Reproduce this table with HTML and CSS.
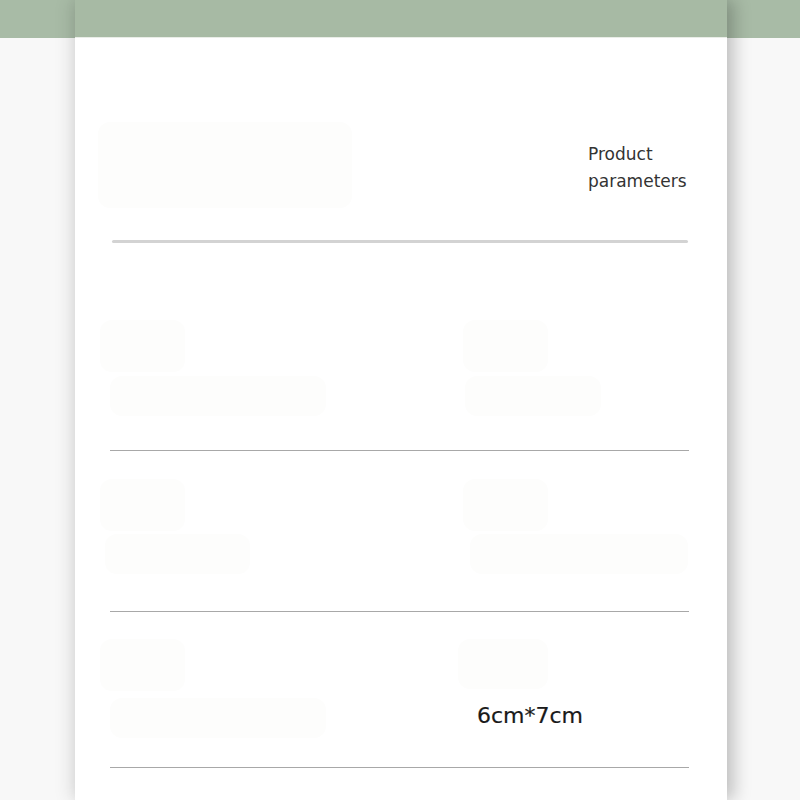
FILE: index.html
```html
<!DOCTYPE html>
<html lang="en">
<head>
    <meta charset="UTF-8">
    <meta name="viewport" content="width=device-width, initial-scale=1.0">
    <title>Product parameters</title>
    <link rel="stylesheet" href="styles.css">
</head>
<body>
    <div class="page">
        <div class="sheet">
            <div class="sheet-top"></div>

            <div class="sheet-body">
                <div class="head">
                    <div class="blob blob-title"></div>
                    <p class="head-text">Product<br>parameters</p>
                </div>
                <hr class="rule-thick">

                <div class="param-row row-one">
                    <div class="cell">
                        <div class="blob blob-label"></div>
                        <div class="blob blob-value wide-a"></div>
                    </div>
                    <div class="cell cell-right">
                        <div class="blob blob-label"></div>
                        <div class="blob blob-value wide-b"></div>
                    </div>
                </div>

                <div class="param-row row-two">
                    <div class="cell">
                        <div class="blob blob-label"></div>
                        <div class="blob blob-value wide-c"></div>
                    </div>
                    <div class="cell cell-right">
                        <div class="blob blob-label"></div>
                        <div class="blob blob-value wide-d"></div>
                    </div>
                </div>

                <div class="param-row row-three">
                    <div class="cell">
                        <div class="blob blob-label"></div>
                        <div class="blob blob-value wide-a"></div>
                    </div>
                    <div class="cell cell-right">
                        <div class="blob blob-label wide-label"></div>
                        <p class="size-text">6cm*7cm</p>
                    </div>
                </div>
            </div>
        </div>
    </div>
</body>
</html>
```

FILE: styles.css
```css
body {
    margin: 0;
    padding: 0;
    font-family: "DejaVu Sans", "Liberation Sans", sans-serif;
    background-color: #f8f8f8;
}

.page {
    height: 800px;
    overflow: hidden;
    background: linear-gradient(#a8bba6 0, #a8bba6 38px, #f8f8f8 38px);
}

.sheet {
    margin-left: 75px;
    width: 652px;
    height: 800px;
    background-color: #fff;
    box-shadow: -6px 0 16px rgba(0, 0, 0, 0.09), 8px 0 16px rgba(0, 0, 0, 0.2);
}

.sheet-top {
    height: 38px;
    background-color: #a7baa4;
    border-bottom: 1px solid #e9ede7;
    box-sizing: border-box;
}

.sheet-body {
    padding: 0 38px 0 35px;
}

.blob {
    background-color: #fdfdfc;
    border-radius: 12px;
}

.head {
    display: flex;
    justify-content: space-between;
    align-items: flex-start;
    padding-top: 84px;
}

.blob-title {
    width: 254px;
    height: 86px;
    margin-left: -12px;
}

.head-text {
    margin: 19px 1px 0 0;
    width: 100px;
    font-size: 17px;
    line-height: 27px;
    color: #333;
}

.rule-thick {
    margin: 32px 1px 0 2px;
    height: 3px;
    border: none;
    border-radius: 2px;
    background-color: #d3d3d3;
}

.param-row {
    display: grid;
    grid-template-columns: 352px 1fr;
    box-sizing: border-box;
    border-bottom: 1px solid #a8a8a8;
}

.cell {
    display: flex;
    flex-direction: column;
    align-items: flex-start;
}

.row-one {
    height: 208px;
    padding-top: 77px;
}

.row-one .cell {
    gap: 4px;
}

.row-two {
    height: 161px;
    padding-top: 28px;
}

.row-two .cell {
    gap: 3px;
}

.row-three {
    height: 156px;
    padding-top: 27px;
}

.row-three .cell {
    gap: 7px;
}

.blob-label {
    width: 85px;
    height: 52px;
    margin-left: -10px;
}

.cell-right .blob-label {
    margin-left: 1px;
}

.cell-right .wide-label {
    width: 90px;
    height: 50px;
    margin-left: -4px;
}

.blob-value {
    height: 40px;
}

.wide-a {
    width: 216px;
}

.wide-b {
    width: 136px;
    margin-left: 3px;
}

.wide-c {
    width: 145px;
    margin-left: -5px;
}

.wide-d {
    width: 218px;
    margin-left: 8px;
}

.size-text {
    margin: 5px 0 0 15px;
    font-size: 22px;
    line-height: 30px;
    color: #1a1a1a;
    -webkit-text-stroke: 0.2px #1a1a1a;
}
```
